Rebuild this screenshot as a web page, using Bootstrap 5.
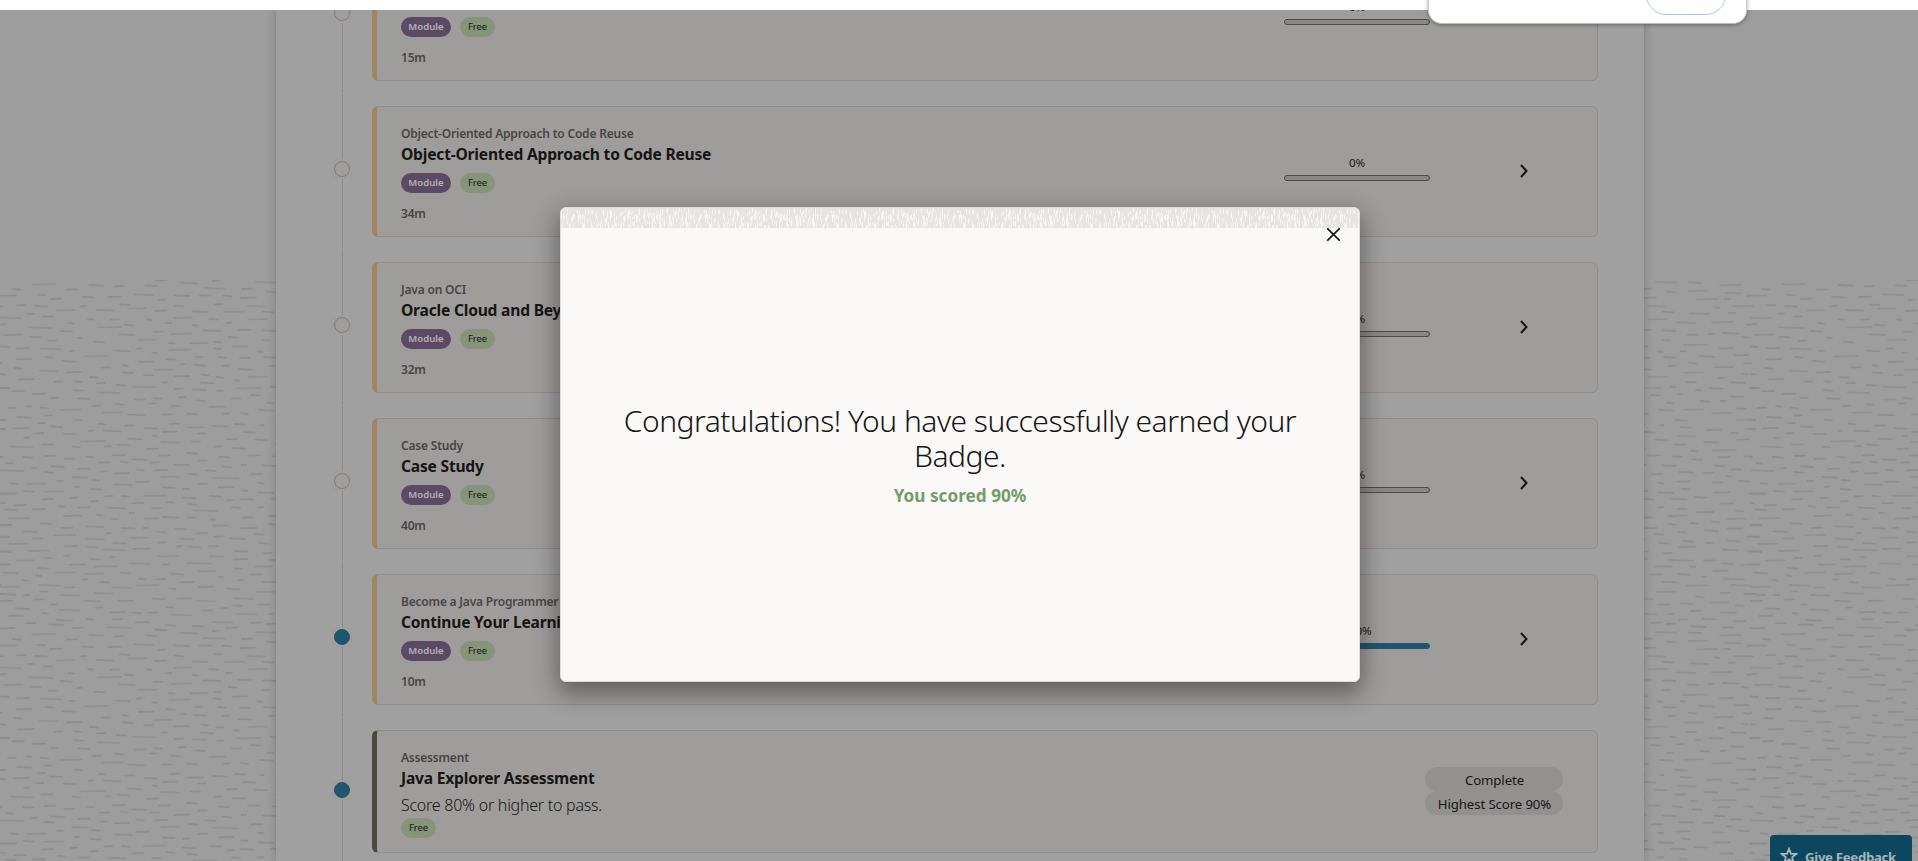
<!DOCTYPE html>
<html lang="en">
<head>
<meta charset="utf-8">
<meta name="viewport" content="width=device-width, initial-scale=1">
<title>Java Explorer</title>
<link rel="stylesheet" href="https://cdn.jsdelivr.net/npm/bootstrap@5.3.0/dist/css/bootstrap.min.css">
<style>
  body { height: 861px; font-family: "Noto Sans", "Open Sans", sans-serif; color: #161513; background: #fff; }
  .page-area { margin-top: 10px; height: 851px; background: #9d9d9d; }
  .weave { top: 270px; left: 0; width: 100%; height: 581px; }
  .path-panel { display: flow-root; width: 1368px; height: 851px; margin-left: 276px; background: #a0a0a0; box-shadow: 0 0 8px rgba(0,0,0,.22); }
  .path-list { margin-top: -73px; padding: 0 46px 0 56px; }
  .step { height: 156px; }
  .rail { width: 20px; margin-right: 20px; padding-top: 1px; }
  .rail i { width: 1px; background: #8b8b8b; }
  .rail i:first-child { height: 65px; }
  .rail .dot { width: 20px; height: 20px; padding: 2px; background: #a09e9c; }
  .rail .dot b { width: 16px; height: 16px; border: 1.5px solid #827d7d; }
  .rail .dot.done b { background: #1f566d; border-color: #1f566d; }
  .step.assess .rail i:first-child { height: 62px; }
  .unit { height: 131px; margin-top: 13px; padding: 18px 34px 0 24px; background: #9f9d9b; border: 1px solid #8f8e8d; border-left: 5px solid #a38361; border-radius: 6px; }
  .assess .unit { height: 123px; border-left-color: #4b4942; }
  .eyebrow { font-size: 12px; line-height: 18px; min-height: 18px; font-weight: 600; letter-spacing: -.2px; color: #474644; }
  .unit h2 { font-size: 15.6px; line-height: 22px; min-height: 22px; font-weight: 700; letter-spacing: -.21px; }
  .tag { height: 20px; line-height: 20px; font-size: 9.6px; border-radius: 10px; text-align: center; }
  .tag-module { width: 50px; background: #5b4a63; color: #b5b1b5; font-weight: 600; }
  .tag-free { width: 35px; background: #87947a; letter-spacing: -.1px; }
  .note { font-size: 16px; line-height: 24px; font-weight: 300; letter-spacing: -.25px; }
  .meter { width: 146px; margin-right: 89px; font-size: 11.6px; letter-spacing: -.2px; line-height: 18px; padding-top: 29px; }
  .meter .track { height: 6px; margin-top: 3px; border: 1px solid #4b4a49; border-radius: 3px; background: #8a8886; }
  .meter.full .track { background: #1f566d; border-color: #1f566d; }
  .chev { width: 10px; height: 14px; margin-right: 34px; margin-top: 39px; }
  .result { width: 138px; height: 24px; line-height: 26px; font-size: 13.2px; letter-spacing: -.1px; background: #929190; border-radius: 12px; padding-left: 1px; }
  .results { padding-top: 18px; }
  .browser-pop { top: -40px; left: 1428px; width: 319px; height: 64px; background: #fff; border: 1px solid #ccc; border-bottom: 1.5px solid #b9bcbb; border-radius: 14px; box-shadow: 0 1px 4px rgba(0,0,0,.35); z-index: 5; }
  .browser-pop span { position: absolute; left: 217px; top: 14px; width: 80px; height: 40px; border: 1px solid #a8c7fa; border-radius: 20px; }
  .feedback { left: 1770px; top: 835px; width: 142px; height: 40px; border-radius: 4px; background: #0b475e; color: #a9b5b9; font-size: 13.2px; font-weight: 700; letter-spacing: -.3px; line-height: 18px; padding: 12px 0 0 10px; }
  .win { left: 560px; top: 207px; width: 800px; height: 475px; background: #fbf9f8; border: 1px solid #e0dedb; border-radius: 6px; overflow: hidden; }
  .win-shadow { left: 560px; top: 207px; width: 800px; height: 475px; border-radius: 6px; box-shadow: 0 9px 24px 2px rgba(22,16,20,.46); }
  .win .close-x { right: 19.5px; top: 19.500px; width: 13px; height: 13px; }
  .win h1 { font-size: 30px; line-height: 35px; font-weight: 350; letter-spacing: -.5px; margin: 0 0 10px; }
  .win .score { font-size: 17.2px; line-height: 26px; font-weight: 700; color: #759c6c; }
  .win .message { padding: 195px 50px 0; }
</style>
</head>
<body class="overflow-hidden position-relative">
<main class="page-area position-relative overflow-hidden">
  <svg class="weave position-absolute" aria-hidden="true">
    <defs>
      <pattern id="grain" width="1050" height="1050" patternUnits="userSpaceOnUse" patternTransform="scale(.33333)">
        <g transform="translate(0 -60)" fill="none" stroke="#8d8d8d" stroke-width="5.500" stroke-linecap="round" id="grainLines"></g>
      </pattern>
    </defs>
    <rect width="100%" height="100%" fill="url(#grain)"/>
  </svg>
  <div class="path-panel position-relative overflow-visible">
    <div class="path-list" id="steps"></div>
  </div>
</main>
<div class="browser-pop position-absolute"><span></span></div>
<button class="feedback position-absolute d-flex align-items-start border-0" type="button">
  <svg class="flex-shrink-0" width="18" height="18" viewBox="0 0 18 18" fill="none" stroke="#a9b5b9" stroke-width="1.8"><path d="M9 1.8l2 5h5.4l-4.3 3.5 1.6 5.3L9 12.4l-4.7 3.2 1.6-5.3L1.600 6.800H7z"/></svg>
  <span style="margin-left:7px;margin-top:1px" class="text-nowrap">Give Feedback</span>
</button>
<div class="win-shadow position-absolute"></div>
<section class="win position-absolute" role="dialog" aria-label="Badge earned">
  <svg class="position-absolute top-0 start-0" width="798" height="20" aria-hidden="true">
    <defs><pattern id="bark" width="127" height="20" patternUnits="userSpaceOnUse"><g id="barkLines" stroke="#fbf9f8" stroke-width="1"></g></pattern></defs>
    <rect width="798" height="20" fill="#e7e5e4"/><rect width="798" height="20" fill="url(#bark)"/>
  </svg>
  <svg class="close-x position-absolute" viewBox="0 0 13 13" stroke="#161513" stroke-width="1.7" stroke-linecap="round"><path d="M.8.8l11.400 11.400M12.200.8L.8 12.200"/></svg>
  <div class="message text-center">
    <h1>Congratulations! You have successfully earned your Badge.</h1>
    <div class="score">You scored 90%</div>
  </div>
</section>
<script src="https://cdn.jsdelivr.net/npm/bootstrap@5.3.0/dist/js/bootstrap.bundle.min.js"></script>
<script>
  // learning path rows; the first one is scrolled partly out of view
  const rows = [
    ['', '', '15m', 0],
    ['Object-Oriented Approach to Code Reuse', 'Object-Oriented Approach to Code Reuse', '34m', 0],
    ['Java on OCI', 'Oracle Cloud and Beyond', '32m', 0],
    ['Case Study', 'Case Study', '40m', 0],
    ['Become a Java Programmer', 'Continue Your Learning', '10m', 100]
  ];
  const rail = done => `<div class="rail d-flex flex-column align-items-center flex-shrink-0"><i></i><div class="dot ${done ? 'done' : ''}"><b class="d-block rounded-circle"></b></div><i class="flex-grow-1"></i></div>`;
  document.getElementById('steps').innerHTML = rows.map(([a, b, t, p]) => `
    <div class="step d-flex">${rail(p)}
      <article class="unit d-flex flex-grow-1">
        <div class="flex-grow-1">
          <div class="eyebrow">${a}</div>
          <h2 class="m-0">${b}</h2>
          <div class="d-flex mt-2"><span class="tag tag-module">Module</span><span class="tag tag-free" style="margin-left:9px">Free</span></div>
          <div class="eyebrow" style="margin-top:12px">${t}</div>
        </div>
        <div class="meter text-center ${p ? 'full' : ''}">${p}%<div class="track"></div></div>
        <svg class="chev" viewBox="0 0 10 14" fill="none" stroke="#161513" stroke-width="2"><path d="M2 1l5.500 6-5.500 6"/></svg>
      </article>
    </div>`).join('') + `
    <div class="step assess d-flex">${rail(true)}
      <article class="unit d-flex flex-grow-1">
        <div class="flex-grow-1">
          <div class="eyebrow">Assessment</div>
          <h2 class="m-0">Java Explorer Assessment</h2>
          <div class="note mt-1">Score 80% or higher to pass.</div>
          <div class="tag tag-free" style="margin-top:1px">Free</div>
        </div>
        <div class="results text-center"><div class="result">Complete</div><div class="result">Highest Score 90%</div></div>
      </article>
    </div>`;

  // short horizontal strokes of the background: x, y, length
  const grain = [
    94,73,74, 35,87,28, 199,89,34, 266,75,45, 341,79,30, 435,76,36, 466,61,36, 540,68,53, 637,63,21, 609,84,68, 724,87,34, 765,66,66,
    0,107,50, 111,104,26, 149,117,38, 244,110,39, 323,111,42, 399,103,62, 474,120,21, 520,106,51, 597,107,40, 666,107,31, 720,114,50, 798,95,30,
    49,136,29, 104,138,39, 239,139,21, 357,133,33, 382,146,58, 522,137,29, 641,133,28, 742,138,56, 169,151,57, 289,150,53, 465,153,36, 576,154,47, 671,156,63, 785,155,38,
    82,162,24, 0,173,64, 129,170,30, 262,177,21, 330,179,29, 437,178,20, 519,174,58, 626,177,29, 744,178,60, 203,189,22, 0,193,20, 372,194,32, 494,190,22, 577,195,20, 676,189,21,
    86,202,74, 291,202,76, 179,213,39, 459,216,31, 608,211,54, 713,210,41, 788,211,40, 11,225,58, 356,223,50, 513,222,62, 87,230,37, 231,234,17, 684,231,26, 144,243,27, 280,245,35, 412,240,58, 505,249,21, 569,250,54, 640,245,26, 785,241,28,
    0,259,27, 48,265,42, 120,266,66, 206,273,20, 347,272,43, 408,266,21, 454,277,18, 506,270,67, 640,265,23, 695,260,48, 771,274,18, 250,289,75, 134,291,24, 49,298,48, 185,303,42, 413,306,49, 497,297,30, 586,291,24, 653,291,26, 718,294,32, 790,291,38,
    0,309,7, 41,324,27, 303,323,30, 366,316,20, 540,313,16, 579,315,41, 663,318,26, 714,327,42, 804,318,24, 117,332,58, 198,337,46, 365,337,34, 462,330,56, 0,342,17, 430,346,30, 602,344,25, 53,358,50, 268,351,29, 520,349,51, 648,351,24, 743,351,60, 701,360,18,
    162,365,26, 220,364,24, 288,370,29, 347,375,32, 486,368,17, 601,368,42, 0,385,30, 396,380,74, 522,387,29, 575,388,45, 707,385,75, 810,380,18, 36,394,38, 219,390,32, 650,393,22, 291,397,68, 96,402,42, 752,405,28, 150,414,26, 231,415,39, 404,419,32, 459,414,30, 533,412,26, 588,421,26, 693,416,30, 345,432,26, 447,431,22, 76,438,19, 275,438,28, 512,437,29, 626,441,51, 799,428,22,
    22,444,28, 119,443,28, 180,450,66, 778,450,41, 305,458,62, 382,464,54, 484,464,32, 560,461,32, 668,461,22, 721,460,25, 131,467,26, 50,471,45, 0,480,15, 221,479,27, 112,490,25, 294,491,23, 508,492,32, 703,492,33, 779,496,14, 149,499,39, 374,497,31, 637,498,46, 38,505,50, 432,504,40, 563,503,48, 0,507,18, 263,513,17, 309,512,54, 485,516,46, 729,516,38, 106,520,26, 188,521,41, 591,521,26, 456,527,18,
    70,534,20, 382,536,46, 679,538,33, 764,539,38, 240,544,78, 482,546,59, 571,545,31, 32,560,68, 123,554,37, 350,554,38, 313,559,21, 216,560,26, 641,560,24, 696,564,40, 440,567,36, 558,579,36, 336,586,39, 67,591,34, 132,588,36, 259,590,25, 475,587,37, 655,590,33, 742,587,39, 0,591,6, 191,597,34, 396,598,44, 594,602,28, 17,609,23, 298,608,34, 361,605,23, 451,608,29,
    150,619,44, 521,615,46, 667,620,29, 723,615,17, 786,616,44, 91,625,20, 0,631,72, 232,627,39, 131,636,32, 300,635,23, 409,629,25, 466,631,38, 614,631,34, 342,640,46, 565,642,31, 752,643,36, 215,651,49, 482,651,56, 637,653,80, 170,663,23, 274,660,26, 406,666,42,
    29,670,26, 82,672,58, 340,673,57, 595,672,28, 771,668,22, 222,681,18, 486,682,40, 652,682,50, 270,687,33, 547,687,22, 70,693,34, 132,695,58, 722,691,22, 0,701,52, 772,697,48, 312,709,27, 364,708,27, 429,708,70, 628,708,36, 211,714,22, 545,713,43, 124,718,35, 720,717,41, 270,724,26, 497,726,28, 680,721,20, 0,728,14, 395,730,38, 562,732,30,
    40,736,40, 173,738,24, 231,743,40, 323,743,54, 454,745,30, 693,742,29, 772,742,20, 13,748,37, 97,748,39, 578,751,77, 387,759,17, 287,764,21, 190,768,55, 486,771,51, 562,773,27, 806,768,22, 25,775,65, 332,776,23, 433,776,44, 630,778,16, 724,773,36, 119,790,36, 0,795,36, 255,799,58, 638,797,46, 803,792,24,
    183,804,36, 364,804,42, 428,804,18, 524,806,38, 722,805,50, 68,814,45, 316,820,19, 469,815,32, 588,820,35, 760,822,33, 160,826,68, 0,830,27, 98,836,32, 255,836,60, 389,834,56, 539,836,42, 640,830,30, 689,835,47, 24,852,60, 338,849,41, 471,848,27, 778,849,29, 191,859,43, 260,860,34, 529,859,19, 564,860,39, 625,859,32, 310,869,70, 398,867,54, 0,874,36, 84,873,64, 702,873,44, 788,880,28, 131,893,26, 190,888,23, 329,890,17, 470,889,68, 628,888,44,
    48,902,57, 270,897,32, 699,898,44, 806,899,22, 207,914,50, 387,910,65, 487,914,22, 560,909,75, 0,913,30, 110,924,36, 281,920,70, 703,925,26, 764,920,54, 10,938,44, 164,938,64, 360,938,32, 593,934,54, 108,946,17, 252,942,59, 512,941,40, 749,944,38, 65,960,20, 245,959,20, 415,956,22, 467,958,32, 652,950,18, 711,961,20, 299,966,28, 540,967,40, 785,965,44,
    0,981,60, 117,975,63, 192,983,33, 334,982,60, 408,976,70, 505,985,24, 596,981,48, 678,986,43, 119,995,26, 281,999,60, 770,996,58, 18,1003,29, 69,1006,22, 180,1005,60, 102,1019,32, 457,1016,38, 530,1016,46, 702,1015,57, 0,1023,38, 252,1022,50, 353,1023,47, 587,1022,60, 152,1034,21, 697,1036,30, 771,1034,40, 44,1045,47, 286,1043,22, 497,1041,24, 661,1045,22, 178,1049,60, 605,1052,34, 125,1059,22, 328,1057,50, 395,1058,30, 443,1058,32, 710,1061,64,
    26,1068,44, 514,1064,63, 803,1062,18, 258,1077,25, 335,1078,34, 168,1080,50, 75,1090,34, 146,1093,45, 405,1087,43, 637,1086,62, 752,1089,30, 495,1095,34, 797,1092,30, 575,1098,38, 217,1104,33, 320,1102,75, 0,1105,45, 463,1108,40, 676,1104,38,
    864,67,39, 958,76,66, 1026,49,24, 863,93,61, 974,98,48, 887,118,68, 972,116,20, 1040,108,10, 945,142,16, 998,139,60, 868,160,60, 985,159,24, 829,187,60, 933,187,66, 1040,193,10, 924,222,22, 966,219,52, 862,225,36, 1023,231,22, 850,255,72, 839,273,20, 957,265,46, 897,288,48, 1000,286,46, 863,308,28, 941,322,60, 1030,309,20, 852,338,60, 1022,341,25, 955,354,18, 993,367,44, 856,367,34, 926,384,44, 885,391,18, 1048,384,20, 830,403,20, 899,423,30, 960,423,22, 992,409,40, 851,449,60, 1008,445,30, 934,460,60, 826,480,36, 1008,480,58, 839,501,36, 918,510,46, 992,518,24, 1034,507,30, 831,527,58, 1010,539,38, 910,546,46, 824,554,34, 871,572,22, 936,571,74, 815,589,34, 1031,590,26, 876,598,32, 952,592,40, 940,617,36, 991,629,34, 836,636,46, 910,639,32, 978,648,18, 830,665,40, 1014,662,34, 938,668,32, 843,686,28, 940,698,50, 882,711,40, 1046,701,50, 812,716,50, 958,731,44, 832,746,30, 888,757,54, 1005,752,26, 802,768,60, 932,785,28, 980,777,58, 870,789,26, 1054,795,30, 911,811,46, 980,806,48, 832,815,28, 1040,830,38, 850,843,34, 917,849,24, 980,842,40, 837,861,50, 965,869,50, 1042,874,40, 802,900,80, 910,902,36, 962,910,40, 1022,914,56, 868,919,20, 938,933,48, 832,942,38, 903,951,18, 970,956,66, 856,977,70, 993,975,58, 960,999,30, 886,1010,28, 1030,1002,36, 840,1030,40, 930,1028,58, 1005,1036,28, 870,1053,34, 960,1057,50, 835,1079,28, 905,1076,42, 1000,1084,38, 868,1099,52, 970,1103,30
  ];
  let g = '';
  for (let i = 0; i < grain.length; i += 3) {
    const [x, y, w] = grain.slice(i, i + 3), s = (i % 2 ? 2 : -1);
    g += `<path d="M${x + 2} ${y}l${w - 4} ${s}" stroke-opacity="${w > 55 ? .75 : .9}"/>`;
    if (x + w > 1050) g += `<path d="M${x - 1050} ${y}h${w}"/>`;
  }
  document.getElementById('grainLines').innerHTML = g;

  // vertical flecks of the dialog's top band
  let seed = 11, v = '';
  const rnd = () => (seed = (seed * 16807) % 2147483647) / 2147483647;
  for (let i = 0; i < 210; i++) {
    const x = Math.floor(rnd() * 127) + .5, y = rnd() * 18, h = 2 + rnd() * 5;
    v += `<path d="M${x} ${y.toFixed(1)}v${h.toFixed(1)}" stroke-opacity="${(.45 + rnd() * .5).toFixed(2)}"/>`;
  }
  document.getElementById('barkLines').innerHTML = v;
</script>
</body>
</html>
